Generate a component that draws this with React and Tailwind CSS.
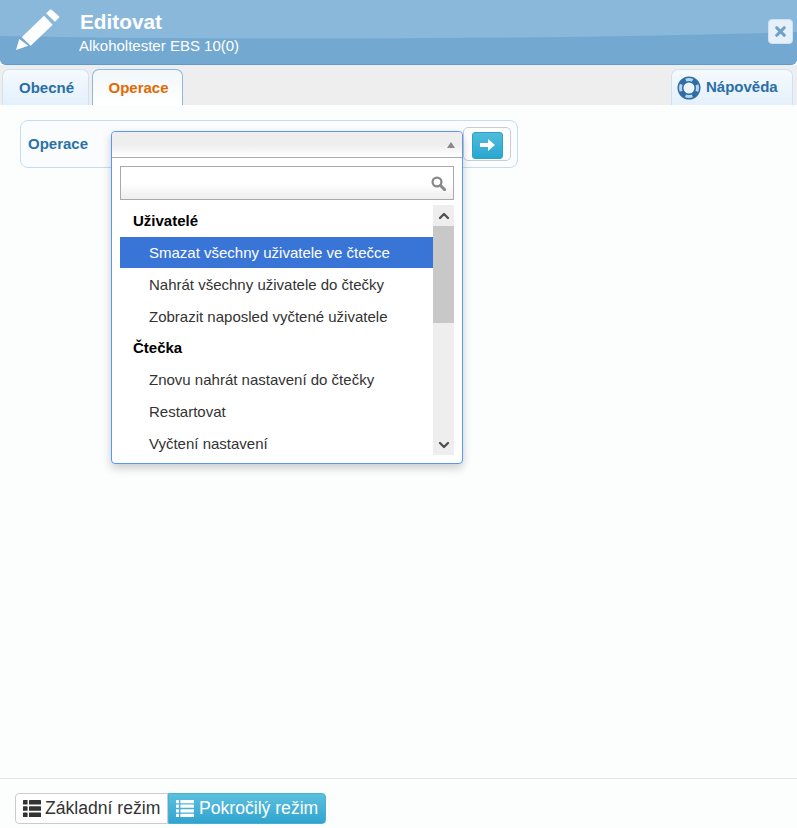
import { ChevronDown, ChevronUp, X } from 'lucide-react'

function PencilIcon() {
  return (
    <svg width="46" height="46" viewBox="0 0 46 46" fill="white">
      <path d="M1 41 L4.3 30 L13.3 36.7 Z" />
      <path d="M6.7 28.3 L29 6.7 L37.7 15.7 L15.7 36.7 Z" />
      <path d="M31 4.3 L35 0.8 Q35.8 0 36.6 0.8 L44 7.2 Q44.6 8 44 8.6 L40 12.8 Z" />
    </svg>
  )
}

function LifeRing() {
  return (
    <svg width="24" height="24" viewBox="0 0 24 24" fill="none">
      <circle cx="12" cy="12" r="8.5" stroke="#2f6ea5" strokeWidth="6" />
      <circle cx="12" cy="12" r="8.5" stroke="#b9d6ee" strokeWidth="3" strokeDasharray="7 6.35" strokeDashoffset="3.5" />
    </svg>
  )
}

function ThLarge() {
  return (
    <svg width="18" height="17" viewBox="0 0 18 17" fill="#333">
      <rect x="0" y="0" width="4.6" height="4.6" rx="0.6" />
      <rect x="6" y="0" width="12" height="4.6" rx="0.6" />
      <rect x="0" y="6.2" width="4.6" height="4.6" rx="0.6" />
      <rect x="6" y="6.2" width="12" height="4.6" rx="0.6" />
      <rect x="0" y="12.4" width="4.6" height="4.6" rx="0.6" />
      <rect x="6" y="12.4" width="12" height="4.6" rx="0.6" />
    </svg>
  )
}

function ThList() {
  return (
    <svg width="18" height="17" viewBox="0 0 18 17" fill="white">
      {[0, 4.6, 9.2, 13.8].map((y) => (
        <g key={y}>
          <rect x="0" y={y} width="3" height="3.2" rx="0.5" />
          <rect x="4.4" y={y} width="13.6" height="3.2" rx="0.5" />
        </g>
      ))}
    </svg>
  )
}

function SearchGlyph() {
  return (
    <svg width="15" height="15" viewBox="0 0 15 15" fill="none" stroke="#888">
      <circle cx="6" cy="6" r="4.4" strokeWidth="2.3" />
      <path d="M9.5 9.5 L13.6 13.6" strokeWidth="3" strokeLinecap="round" />
    </svg>
  )
}

function ArrowGlyph() {
  return (
    <svg width="15" height="12" viewBox="0 0 15 12" fill="white">
      <rect x="0" y="4" width="9" height="4" />
      <path d="M8 0 L15 6 L8 12 Z" />
    </svg>
  )
}

const groups = [
  {
    title: 'Uživatelé',
    items: [
      'Smazat všechny uživatele ve čtečce',
      'Nahrát všechny uživatele do čtečky',
      'Zobrazit naposled vyčtené uživatele',
    ],
  },
  {
    title: 'Čtečka',
    items: ['Znovu nahrát nastavení do čtečky', 'Restartovat', 'Vyčtení nastavení'],
  },
]

function Dropdown() {
  return (
    <div className="absolute left-[111px] top-[131px] z-10 w-[352px] h-[333px] bg-white border border-[#5897fb] rounded-[4px] shadow-[0_4px_10px_rgba(0,0,0,0.2)] flex flex-col">
      <div className="h-[26px] shrink-0 border-b border-[#aaa] rounded-t-[4px] bg-gradient-to-b from-[#eeeeee] via-[#eeeeee] to-white flex items-center justify-end pr-[7px]">
        <span className="w-0 h-0 border-x-[4px] border-x-transparent border-b-[6px] border-b-[#888]" />
      </div>
      <div className="mx-[8px] mt-[8px] h-[34px] shrink-0 border border-[#aaa] bg-gradient-to-t from-[#eeeeee] via-white to-white flex items-center justify-end pr-[7px]">
        <SearchGlyph />
      </div>
      <div className="mx-[8px] mt-[5px] flex flex-1 min-h-0">
        <div className="flex-1 min-w-0 overflow-hidden">
          {groups.map((group, g) => (
            <div key={group.title}>
              <div className={`pl-[13px] flex items-center text-[15px] font-bold text-black ${g === 0 ? 'h-[32px]' : 'h-[31px] pt-[1px]'}`}>
                {group.title}
              </div>
              {group.items.map((item, i) => (
                <div
                  key={item}
                  className={`pl-[29px] flex items-center text-[15px] ${
                    g === 0 && i === 0 ? 'bg-[#3875d7] text-white h-[31px] pt-[1px]' : 'text-[#333] h-[32px] pt-[2px]'
                  }`}
                >
                  {item}
                </div>
              ))}
            </div>
          ))}
        </div>
        <div className="w-[21px] h-[250px] shrink-0 bg-[#eeeeee] flex flex-col">
          <div className="h-[21px] shrink-0 flex items-center justify-center">
            <ChevronUp size={16} strokeWidth={3.5} className="text-[#505050]" />
          </div>
          <div className="h-[97px] shrink-0 bg-[#c8c8c8]" />
          <div className="flex-1" />
          <div className="h-[21px] shrink-0 flex items-center justify-center">
            <ChevronDown size={16} strokeWidth={3.5} className="text-[#505050]" />
          </div>
        </div>
      </div>
    </div>
  )
}

export default function App() {
  return (
    <div className="relative h-[828px] flex flex-col bg-[#fcfefe] font-['Liberation_Sans',Arial,sans-serif] overflow-hidden">
      {/* hlavička */}
      <div className="relative h-[65px] shrink-0 rounded-b-[6px] border-b border-[#5b9bd5] bg-[#8ab8db] overflow-hidden flex items-start">
        <svg className="absolute inset-0 w-full h-full" viewBox="0 0 797 64" preserveAspectRatio="none">
          <path d="M0 36 C150 39 300 39 450 38 C600 37 700 35 797 32 L797 64 L0 64 Z" fill="#73a8d1" />
        </svg>
        <div className="relative ml-[15px] mt-[9px] w-[46px] h-[46px] shrink-0">
          <PencilIcon />
        </div>
        <div className="relative ml-[19px] mt-[10px] text-white">
          <div className="text-[20.8px] leading-[24px] font-bold">Editovat</div>
          <div className="text-[15px] leading-[20px] mt-[2px] ml-[-1px]">Alkoholtester EBS 10(0)</div>
        </div>
        <button className="absolute right-[4px] top-[19px] w-[25px] h-[25px] rounded-[4px] bg-[#e6f0f9] border border-[#cfe0ef] flex items-center justify-center">
          <X size={15} strokeWidth={5} className="text-[#6fa0c8]" />
        </button>
      </div>

      {/* záložky */}
      <div className="h-[40px] shrink-0 bg-[#eeeeee] flex items-end pl-[2px] pr-[4px]">
        <div className="w-[87px] h-[36px] pt-[1px] pl-[2px] rounded-t-[7px] border border-b-0 border-[#cfe2f3] bg-gradient-to-b from-[#f5fafd] to-[#e3f0fb] flex items-center justify-center text-[15px] font-bold text-[#2a6ea6]">
          Obecné
        </div>
        <div className="ml-[3px] w-[91px] h-[36px] pt-[1px] pl-[2px] rounded-t-[7px] border border-b-0 border-[#8ab8e0] bg-gradient-to-b from-[#f2f7fb] to-white flex items-center justify-center text-[15px] font-bold text-[#e26a00]">
          Operace
        </div>
        <div className="ml-auto w-[122px] h-[36px] rounded-t-[7px] border border-b-0 border-[#cfe2f3] bg-gradient-to-b from-[#f5fafd] to-[#e3f0fb] flex items-center pl-[5px] gap-[5px] text-[15px] font-bold text-[#2a6ea6]">
          <LifeRing />
          Nápověda
        </div>
      </div>

      {/* obsah */}
      <div className="flex-1 min-h-0 pt-[15px] pl-[20px]">
        <div className="w-[498px] h-[48px] rounded-[8px] border border-[#c5dcf2] bg-[#fbfcfd] flex items-center pl-[7px]">
          <span className="w-[84px] pt-[1px] text-[15px] font-bold text-[#2a72a8]">Operace</span>
          <div className="w-[351px]" />
          <div className="w-[48px] h-[34px] rounded-[5px] border border-[#ccc] bg-white flex items-center justify-center">
            <div className="mt-[2px] w-[31px] h-[27px] rounded-[3px] border border-[#2aa3c9] bg-gradient-to-b from-[#4fbbdc] to-[#28a7cf] flex items-center justify-center">
              <ArrowGlyph />
            </div>
          </div>
        </div>
      </div>

      {/* patička */}
      <div className="h-[50px] shrink-0 border-t border-[#e2e2e2] pt-[14px] pl-[15px]">
        <div className="flex h-[31px] w-[311px] text-[17.6px]">
          <div className="w-[153px] rounded-l-[4px] border border-[#ccc] bg-white flex items-center pl-[7px] gap-[4px] text-[#333]">
            <ThLarge />
            Základní režim
          </div>
          <div className="w-[158px] rounded-r-[4px] bg-gradient-to-b from-[#5bc0de] to-[#2fa4cf] border border-[#46b0d5] flex items-center pl-[7px] gap-[5px] text-white">
            <ThList />
            Pokročilý režim
          </div>
        </div>
      </div>

      <Dropdown />
    </div>
  )
}
